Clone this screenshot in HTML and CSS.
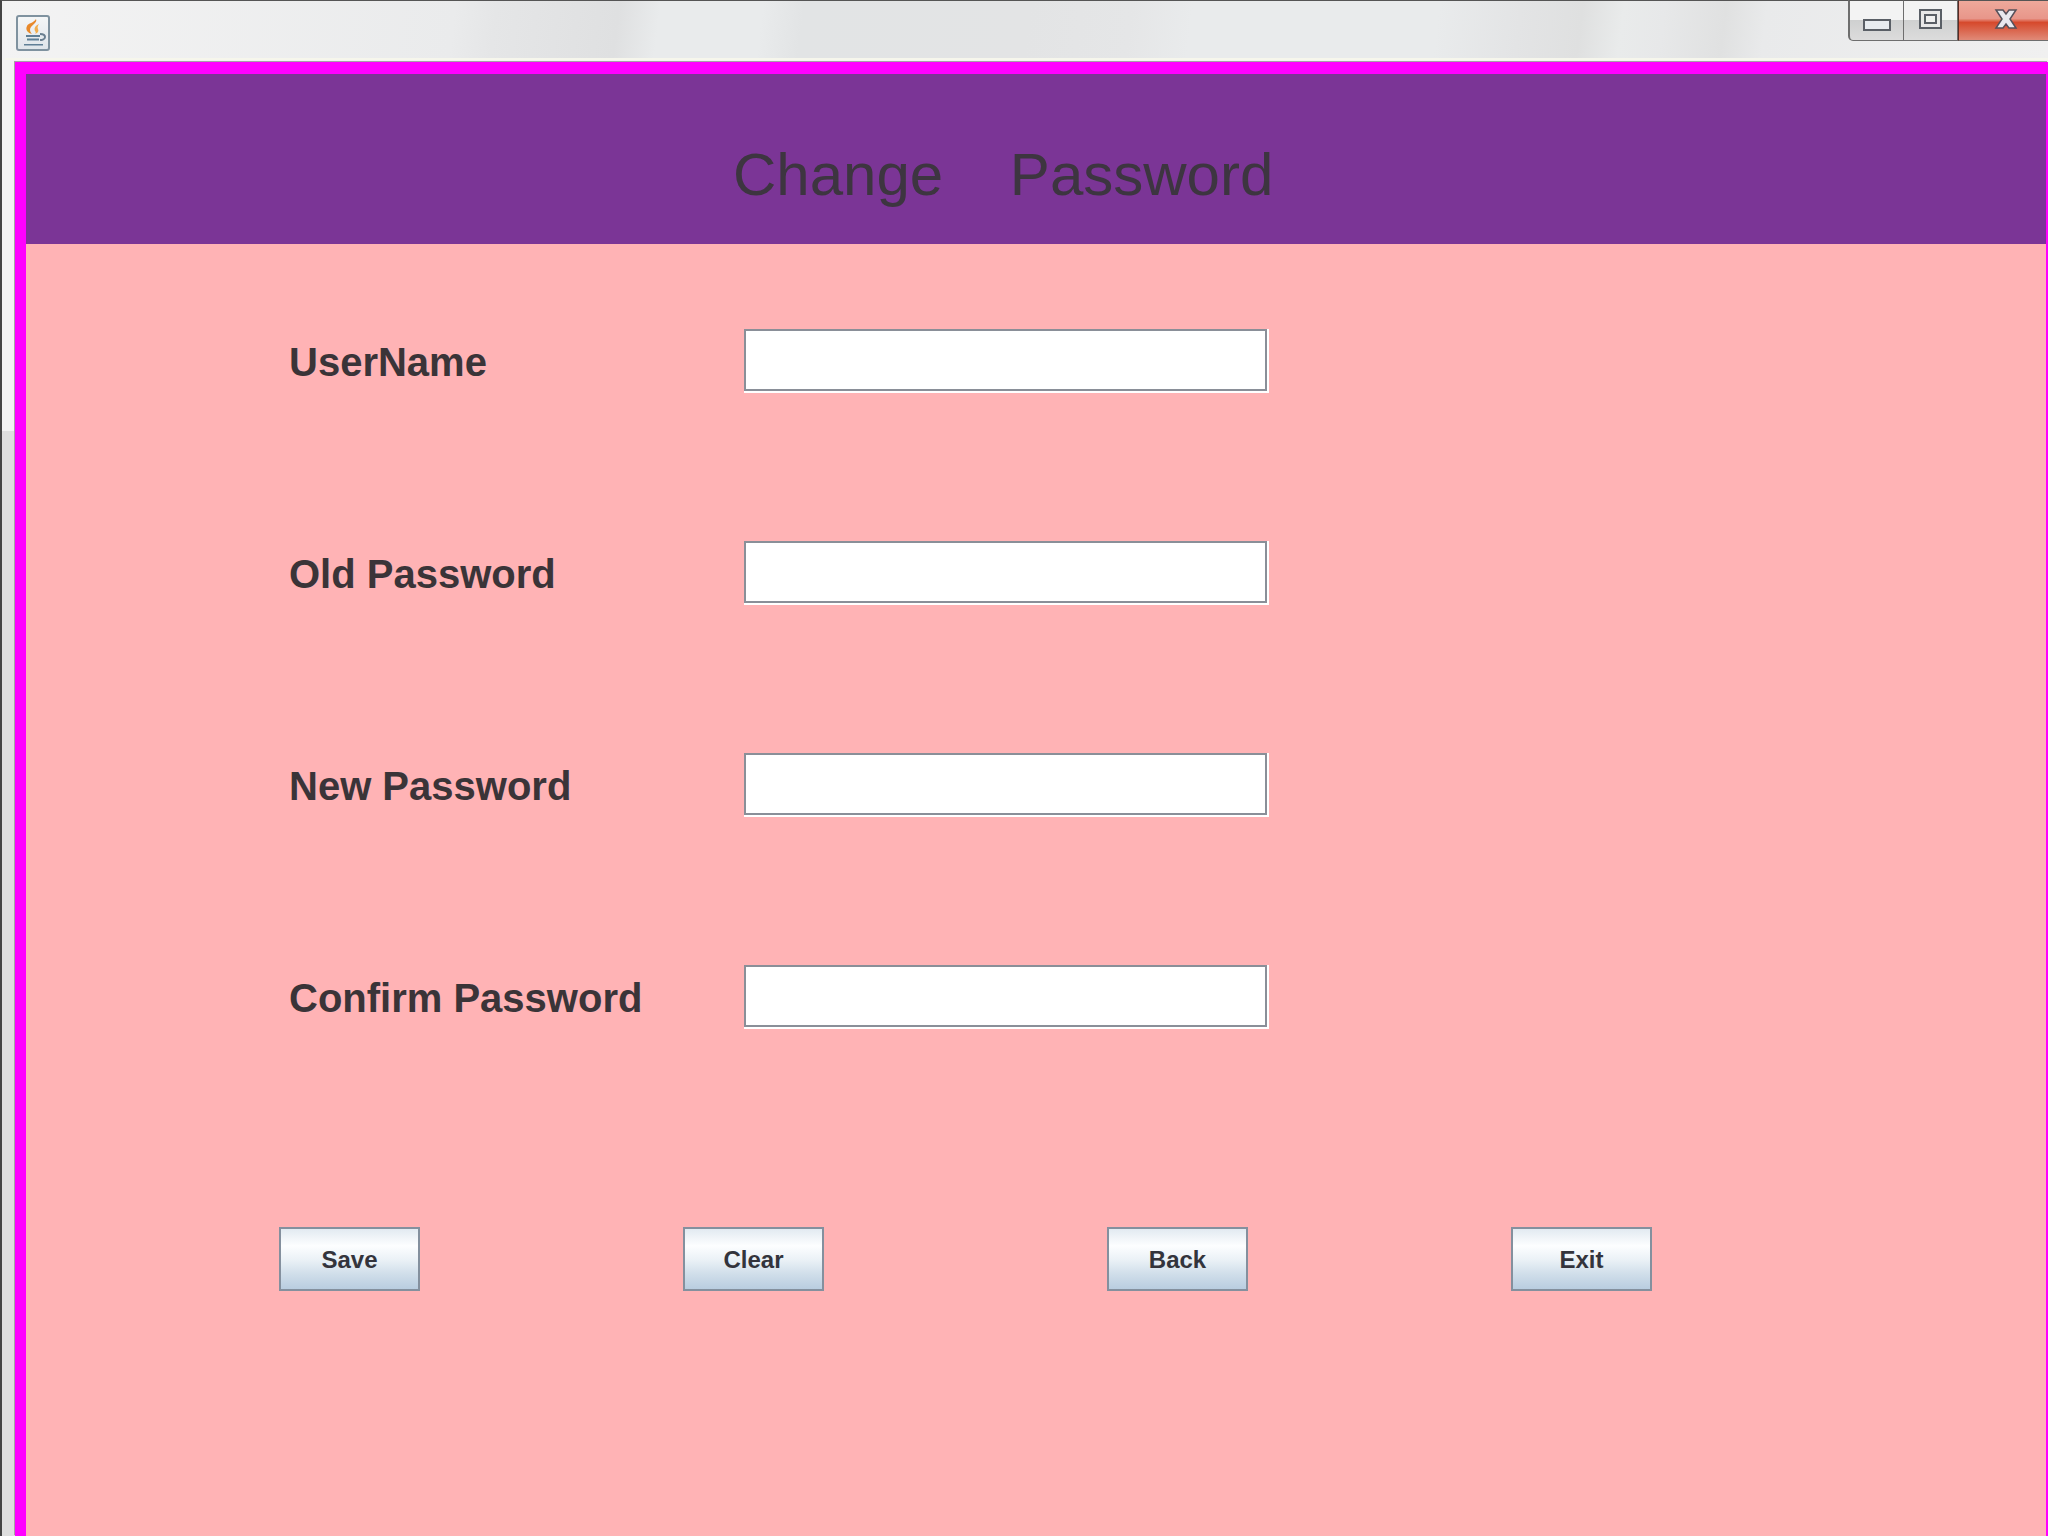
FILE: index.html

```html
<!DOCTYPE html>
<html lang="en">
<head>
    <meta charset="UTF-8">
    <title>Change Password</title>
    <link rel="stylesheet" href="styles.css">
</head>
<body>
    <div class="window">
        <div class="titlebar">
            <div class="app-icon">
                <svg width="28" height="30" viewBox="0 0 28 30">
                    <path d="M17 1c2 4-6 6-6 11 0 2 2 4 2 4-4-1-7-4-5-8 1-3 7-3 9-7z" fill="#e8892a"/>
                    <path d="M20 6c-4 2-5 4-4 7 1 1 1 2 0 3 3-1 4-3 3-5-1-2 0-3 1-5z" fill="#f2ad4c"/>
                    <path d="M7 17h14v2H7zM8 20.500h12v2H8zM5 26h19v1.500H5z" fill="#5f7f96"/>
                    <path d="M21 16c4 0 5 1 5 3s-3 3-5 3" fill="none" stroke="#6a7f90" stroke-width="2"/>
                </svg>
            </div>
            <div class="win-controls">
                <div class="win-btn win-min"><span class="min-glyph"></span></div>
                <div class="win-btn win-max"><span class="max-glyph"></span></div>
                <div class="win-btn win-close">
                    <svg width="24" height="20" viewBox="0 0 24 20">
                        <path d="M2 1h7l3 4 3-4h7l-6 9 6 9h-7l-3-4-3 4H2l6-9z" fill="#e8e8ee" stroke="#55505a" stroke-width="1.500"/>
                    </svg>
                </div>
            </div>
        </div>
        <div class="frame">
            <header class="banner">
                <h1>Change&nbsp;&nbsp;&nbsp;&nbsp;Password</h1>
            </header>
            <div class="content">
                <div class="form">
                    <div class="row">
                        <label>UserName</label>
                        <input type="text" class="field">
                    </div>
                    <div class="row">
                        <label>Old Password</label>
                        <input type="text" class="field">
                    </div>
                    <div class="row">
                        <label>New Password</label>
                        <input type="text" class="field">
                    </div>
                    <div class="row">
                        <label>Confirm Password</label>
                        <input type="text" class="field">
                    </div>
                </div>
                <div class="buttons">
                    <button>Save</button>
                    <button>Clear</button>
                    <button class="back">Back</button>
                    <button>Exit</button>
                </div>
            </div>
        </div>
    </div>
</body>
</html>
```

FILE: styles.css

```css
html, body {
    margin: 0;
    padding: 0;
    height: 100%;
    overflow: hidden;
}
body {
    font-family: "Liberation Sans", Arial, sans-serif;
    background-color: #eeeeee;
}
.window {
    height: 1536px;
    display: flex;
    flex-direction: column;
    box-sizing: border-box;
    padding-left: 3px;
    border-left: 2px solid #444;
    border-top: 1px solid #555;
    background: linear-gradient(#f2f2f2 0, #f2f2f2 430px, #dedede 430px, #dedede 100%);
}
.titlebar {
    height: 59px;
    box-sizing: border-box;
    border-bottom: 2px solid #f6f6ec;
    display: flex;
    justify-content: space-between;
    align-items: flex-start;
    background: linear-gradient(97deg, #f3f3f3 0%, #eaebec 22%, #e5e6e7 24%, #dfe0e1 30%, #e9ebec 32%, #e9ebec 37%, #e2e4e5 39%, #e3e4e5 50%, #e5e6e7 55%, #e9ebec 58%, #e9ebec 70%, #e3e4e5 74%, #dfe0e0 77%, #e9ebeb 79%, #e7e8e9 81%, #e0e1e1 84%, #e9eaeb 86%, #f0f0f0 100%);
}
.app-icon {
    width: 30px;
    height: 32px;
    margin: 14px 0 0 11px;
    border: 2px solid #7f929f;
    border-radius: 3px;
    background: linear-gradient(#f4f6f7, #dfe5ea);
    display: flex;
    align-items: center;
    justify-content: center;
}
.win-controls {
    display: flex;
    height: 41px;
    margin-top: -1px;
}
.win-btn {
    height: 41px;
    box-sizing: border-box;
    display: flex;
    align-items: center;
    justify-content: center;
    border-bottom: 1px solid #6e6e6e;
    border-top: 1px solid #555;
    border-right: 1px solid #6e6e6e;
}
.win-min {
    width: 56px;
    border-left: 2px solid #6e6e6e;
    border-bottom-left-radius: 5px;
    background: linear-gradient(#f3f3f3 0 50%, #cfd0d0 50%, #dcdcdc);
}
.win-max {
    width: 54px;
    background: linear-gradient(#f3f3f3 0 50%, #cfd0d0 50%, #dcdcdc);
}
.win-close {
    flex: 1;
    width: 90px;
    border-right: none;
    border-left: 1px solid #5c2a22;
    padding: 0 0 4px 5px;
    background: linear-gradient(#eea99b 0, #e8968a 45%, #d6492c 55%, #e08a78 100%);
}
.min-glyph {
    width: 24px;
    height: 8px;
    margin-top: 9px;
    border: 2px solid #5a5f66;
    background: #e8ecf0;
}
.max-glyph {
    width: 13px;
    height: 10px;
    margin-top: -3px;
    padding: 3px;
    border: 2px solid #5a5f66;
    background: #f0f0f0;
    background-clip: padding-box;
    box-shadow: inset 0 0 0 3px #e8e8e8, inset 0 0 0 5px #5a5f66;
}
.frame {
    flex: 1;
    display: flex;
    flex-direction: column;
    margin: 2px 0 0 10px;
    border-top: 12px solid #ff00ff;
    border-left: 11px solid #ff00ff;
    border-right: 2px solid #ff00ff;
    box-shadow: -1px -1px 0 #a8a0a8;
    background-color: #ffb3b5;
}
.banner {
    height: 170px;
    flex-shrink: 0;
    background-color: #7b3596;
}
.banner h1 {
    margin: 0;
    padding: 64px 0 0 707px;
    font-size: 60px;
    line-height: 74px;
    font-weight: normal;
    color: #3d3540;
}
.content {
    padding: 85px 0 0 253px;
}
.row {
    display: flex;
    align-items: center;
    height: 62px;
    margin-bottom: 150px;
}
.row label {
    width: 465px;
    padding: 5px 0 0 10px;
    box-sizing: border-box;
    font-size: 40px;
    font-weight: bold;
    color: #3a3438;
}
.field {
    width: 523px;
    height: 62px;
    box-sizing: border-box;
    padding: 0;
    background: #fff;
    border: 2px solid #8a8f98;
    outline: none;
    box-shadow: 1px 1px 0 1px #fff;
}
.buttons {
    display: flex;
    gap: 263px;
    margin-top: 200px;
}
.buttons button {
    width: 141px;
    height: 64px;
    padding: 2px 0 0;
    font-family: "Liberation Sans", Arial, sans-serif;
    font-size: 24px;
    font-weight: bold;
    color: #33343c;
    border: 2px solid #84909e;
    background: linear-gradient(#e2eaf1 0%, #fdfeff 28%, #eaf1f6 52%, #d0deea 75%, #b9cde0 100%);
}
.buttons .back {
    margin-left: 20px;
}
```
